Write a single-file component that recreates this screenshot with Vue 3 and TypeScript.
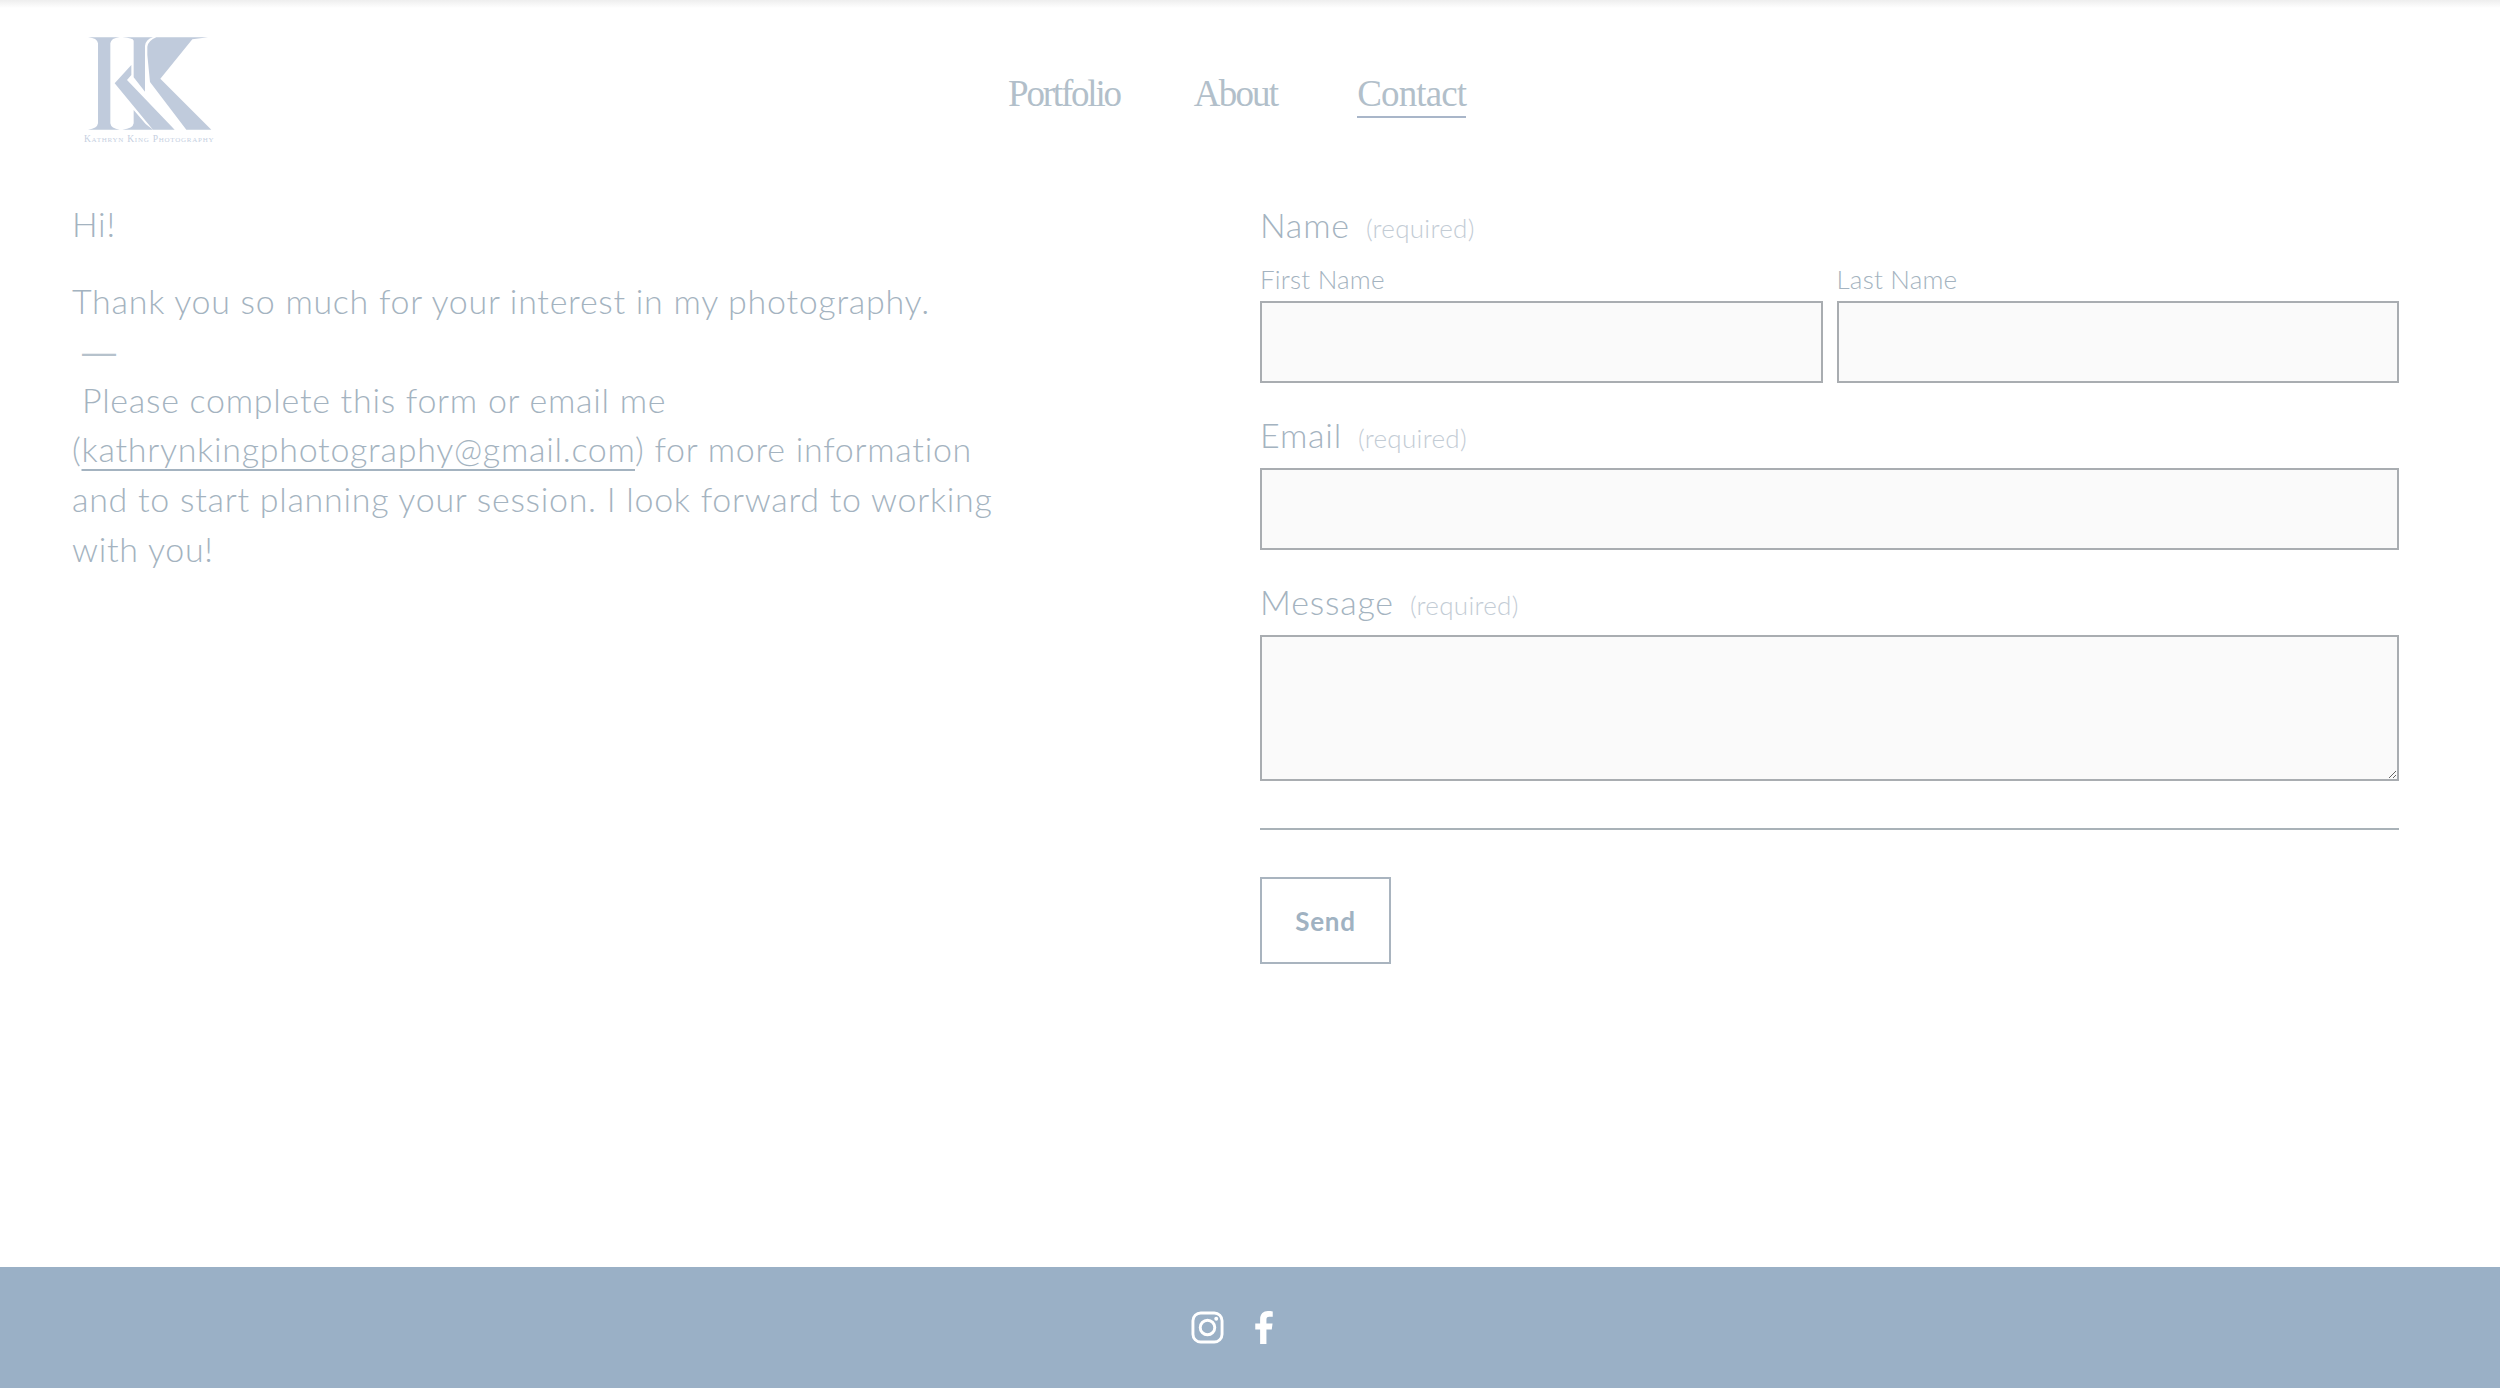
<script setup lang="ts">
const navLinks = ["Portfolio", "About", "Contact"];
</script>

<template>
  <div class="page">
    <header class="site-header">
      <div class="logo">
        <svg class="logo-mark" viewBox="145 112 372 280" aria-label="Kathryn King Photography">
          <path d="M145 112H240Q214 114 212 130V370Q214 386 240 389H145Q173 386 175 370V130Q173 114 145 112Z" />
          <path d="M248 112H340Q318 118 316 138V275L282 232V122Q280 114 248 112Z" />
          <path d="M282 330L318 372 340 389H248Q280 386 282 370Z" />
          <path d="M225 250L275 195V225L262 240 405 389H340Z" />
          <path d="M323 165V140Q326 122 350 112H505L458 118 362 236 515 389H440L331 246Z" />
        </svg>
        <span class="logo-text">Kathryn King Photography</span>
      </div>
      <nav class="main-nav">
        <a v-for="link in navLinks" :key="link" :class="link === 'Contact' ? 'active' : link.toLowerCase()" href="#">{{ link }}</a>
      </nav>
    </header>

    <main class="content">
      <section class="intro">
        <p>Hi!</p>
        <p>Thank you so much for your interest in my photography.<br />&nbsp;<span class="dash">—</span><br />&nbsp;Please complete this form or email me (<a href="#">kathrynkingphotography@gmail.com</a>) for more information and to start planning your session. I look forward to working with you!</p>
      </section>

      <form class="contact-form" @submit.prevent>
        <div class="field-title">Name <span>(required)</span></div>
        <div class="name-row">
          <label>First Name<input type="text" /></label>
          <label>Last Name<input type="text" /></label>
        </div>
        <label class="field">
          <span class="field-title">Email <span>(required)</span></span>
          <input type="text" />
        </label>
        <label class="field">
          <span class="field-title">Message <span>(required)</span></span>
          <textarea></textarea>
        </label>
        <hr />
        <button type="submit">Send</button>
      </form>
    </main>

    <footer class="site-footer">
      <svg class="social" width="33" height="33" viewBox="0 0 34 34" fill="none" stroke="#fff" stroke-width="3">
        <rect x="2" y="2" width="30" height="30" rx="8" />
        <circle cx="17" cy="17" r="7.5" />
        <circle cx="26" cy="8" r="2" fill="#fff" stroke="none" />
      </svg>
      <svg class="social" width="18" height="33" viewBox="1 0 18 34" fill="#fff">
        <path d="M6 34V19H1V13H6V8.500C6 3 9.500 0 14 0C16 0 18 .2 19 .4V6H15.500C13 6 12.500 7.200 12.500 9V13H18.800L18 19H12.500V34Z" />
      </svg>
    </footer>
  </div>
</template>

<style>
body {
  margin: 0;
  background: #fff;
}
</style>

<style scoped>
.page {
  display: flex;
  flex-direction: column;
  height: 1388px;
  overflow: hidden;
  font-family: Lato, "Liberation Sans", sans-serif;
  font-weight: 300;
  color: #a4b3c0;
  background: linear-gradient(#eeeeee, #ffffff 8px);
}

.site-header {
  display: flex;
  height: 189px;
  box-sizing: border-box;
  padding: 37px 0 0 84px;
}

.logo {
  display: flex;
  flex-direction: column;
  width: 132px;
}

.logo-mark {
  width: 124px;
  height: 94px;
  margin-left: 4px;
  fill: #c0cbdc;
}

.logo-text {
  margin-top: 3px;
  font-family: "Liberation Serif", serif;
  font-size: 9.500px;
  font-variant: small-caps;
  letter-spacing: 0.750px;
  white-space: nowrap;
  color: #c6d0df;
}

.main-nav {
  display: flex;
  gap: 74px;
  margin-left: 792px;
}

.main-nav a {
  height: 44px;
  margin-top: 35px;
  font-family: "Liberation Serif", serif;
  font-size: 37px;
  line-height: 44px;
  letter-spacing: -1.800px;
  color: #b2bfca;
  text-decoration: none;
}

.main-nav a.portfolio {
  letter-spacing: -2.200px;
}

.main-nav a.active {
  margin-left: 6px;
  border-bottom: 2px solid #a9b6c9;
  letter-spacing: -0.900px;
}

.content {
  display: flex;
  flex: 1;
  padding: 0 101px 0 72px;
}

.intro {
  width: 930px;
  margin-right: 258px;
  padding-top: 10px;
  font-size: 34px;
  line-height: 49.600px;
  letter-spacing: 0.720px;
}

.intro p {
  margin: 0 0 27px;
}

.intro a {
  color: inherit;
  text-decoration: underline;
  text-decoration-thickness: 2px;
  text-underline-offset: 7px;
}

.dash {
  font-family: "Liberation Sans", sans-serif;
  font-weight: 400;
  line-height: 1;
  color: #b6c2cc;
}

.contact-form {
  flex: 1;
  padding-top: 14px;
}

.field-title {
  display: block;
  font-size: 34px;
  line-height: 44px;
  letter-spacing: 0.800px;
}

.field-title span {
  margin-left: 6px;
  font-size: 26px;
  letter-spacing: 0.300px;
  color: #c3ccd5;
}

.name-row {
  display: grid;
  grid-template-columns: 1fr 1fr;
  gap: 14px;
  margin-top: 11px;
  font-size: 26px;
  line-height: 36px;
  letter-spacing: 0.200px;
}

.name-row label {
  display: block;
}

.name-row input {
  margin-top: 4px;
}

input,
textarea {
  display: block;
  box-sizing: border-box;
  width: 100%;
  height: 82px;
  border: 2px solid #a9adb1;
  border-radius: 0;
  background: #fafafa;
  outline: none;
}

.field {
  display: block;
  margin-top: 30px;
}

.field input,
.field textarea {
  margin-top: 8px;
}

textarea {
  height: 146px;
  resize: vertical;
}

hr {
  height: 2px;
  margin: 47px 0;
  border: 0;
  background: #a9b2b8;
}

button {
  width: 131px;
  height: 87px;
  padding: 0;
  border: 2px solid #a9b4bf;
  border-radius: 0;
  background: #fff;
  font-family: Lato, "Liberation Sans", sans-serif;
  font-size: 26px;
  font-weight: 700;
  letter-spacing: 0.700px;
  color: #a0b2c2;
}

.site-footer {
  display: flex;
  justify-content: center;
  align-items: center;
  gap: 31px;
  height: 121px;
  padding-right: 36px;
  box-sizing: border-box;
  background: #9ab0c6;
}
</style>
